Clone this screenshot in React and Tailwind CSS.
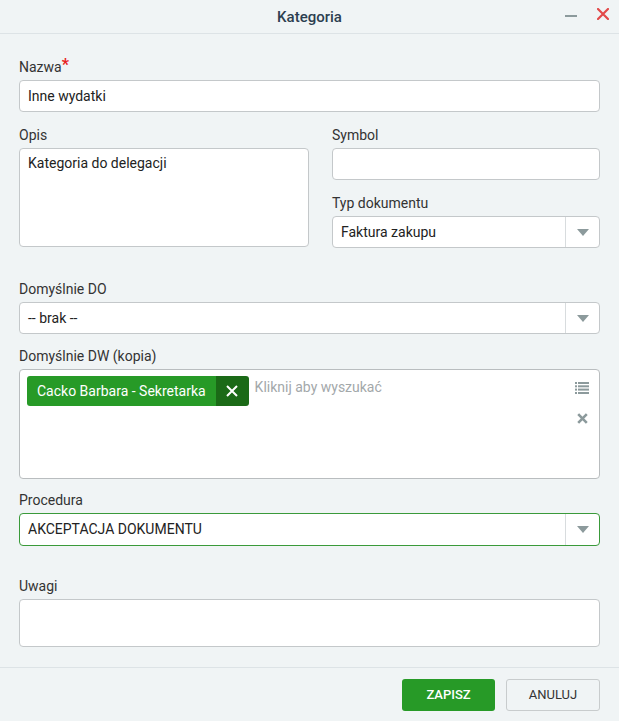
import React from "react";

const Label = ({ children, className = "" }) => (
  <div className={"h-5 leading-5 text-[14px] text-[#333] mb-[3px] " + className}>{children}</div>
);

const Arrow = () => (
  <div className="w-[34px] self-stretch border-l border-[#d8dcde] flex items-center justify-center">
    <svg width="12" height="7" viewBox="0 0 12 7"><path d="M0 0h12L6 7z" fill="#8c9a9c" /></svg>
  </div>
);

const Select = ({ value, className = "", h = "h-8" }) => (
  <div className={"flex items-center bg-white rounded-[4px] border " + h + " " + className}>
    <div className="flex-1 px-[8px] text-[14px] text-[#222] truncate">{value}</div>
    <Arrow />
  </div>
);

export default function App() {
  return (
    <div className="w-[619px] h-[721px] bg-[#f0f4f5] flex flex-col" style={{ fontFamily: "Roboto, 'Liberation Sans', sans-serif" }}>
      <div className="h-[34px] border-b border-[#dde3e6] relative flex items-center justify-center shrink-0 pt-[2px]">
        <div className="text-[15px] font-medium text-[#2c3e50]">Kategoria</div>
        <div className="absolute right-[42px] top-[15px] w-[12px] h-[2px] bg-[#8c9a9c]" />
        <svg className="absolute right-[10px] top-[8px]" width="12" height="12" viewBox="0 0 12 12">
          <path d="M1 1L11 11M11 1L1 11" stroke="#e24a4a" strokeWidth="2.2" strokeLinecap="round" />
        </svg>
      </div>
      <div className="flex-1 px-[19px] pt-[23px] flex flex-col">
        <Label>Nazwa<span className="text-[#e8211d] text-[16px] font-bold align-top leading-4">*</span></Label>
        <div className="h-8 bg-white border border-[#c4c8ca] rounded-[4px] flex items-center px-[8px] text-[14px] text-[#222]">Inne wydatki</div>

        <div className="flex gap-[23px] mt-[13px]">
          <div className="w-[290px] flex flex-col">
            <Label>Opis</Label>
            <div className="h-[99px] bg-white border border-[#c4c8ca] rounded-[4px] px-[8px] pt-[4px] text-[14px] text-[#222]">Kategoria do delegacji</div>
          </div>
          <div className="flex-1 flex flex-col">
            <Label>Symbol</Label>
            <div className="h-8 bg-white border border-[#c4c8ca] rounded-[4px]" />
            <Label className="mt-[13px]">Typ dokumentu</Label>
            <Select value="Faktura zakupu" className="border-[#c4c8ca]" />
          </div>
        </div>

        <Label className="mt-[31px]">Domyślnie DO</Label>
        <Select value="-- brak --" className="border-[#c4c8ca]" />

        <Label className="mt-[12px]">Domyślnie DW (kopia)</Label>
        <div className="h-[110px] bg-white border border-[#b9bdbf] rounded-[4px] relative flex items-start pl-[7px] pt-[6px]">
          <div className="flex h-[30px] rounded-[3px] overflow-hidden">
            <div className="bg-[#279a27] text-white text-[14px] flex items-center px-[10px]">Cacko Barbara - Sekretarka</div>
            <div className="bg-[#1b6a17] w-[33px] flex items-center justify-center">
              <svg width="12" height="12" viewBox="0 0 12 12"><path d="M1 1L11 11M11 1L1 11" stroke="white" strokeWidth="2" /></svg>
            </div>
          </div>
          <div className="ml-[6px] mt-[1px] text-[14px] text-[#a3a8aa] leading-5">Kliknij aby wyszukać</div>
          <svg className="absolute right-[10px] top-[12px]" width="14" height="12" viewBox="0 0 14 12" fill="#8c9a9c">
            <rect x="0" y="0" width="2" height="2" /><rect x="3" y="0" width="11" height="2" />
            <rect x="0" y="3.3" width="2" height="2" /><rect x="3" y="3.3" width="11" height="2" />
            <rect x="0" y="6.6" width="2" height="2" /><rect x="3" y="6.6" width="11" height="2" />
            <rect x="0" y="10" width="2" height="2" /><rect x="3" y="10" width="11" height="2" />
          </svg>
          <svg className="absolute right-[11px] top-[43px]" width="11" height="11" viewBox="0 0 11 11">
            <path d="M1.2 1.2L9.8 9.8M9.8 1.2L1.2 9.8" stroke="#8c9a9c" strokeWidth="2.6" />
          </svg>
        </div>

        <Label className="mt-[11px]">Procedura</Label>
        <Select value="AKCEPTACJA DOKUMENTU" className="border-[#3a9a3a]" h="h-[33px]" />

        <Label className="mt-[30px]">Uwagi</Label>
        <div className="h-[48px] bg-white border border-[#c4c8ca] rounded-[4px]" />
      </div>
      <div className="h-[54px] border-t border-[#dde3e6] flex items-start justify-end gap-[11px] pr-[19px] pt-[11px] shrink-0">
        <div className="w-[93px] h-8 bg-[#279a27] rounded-[3px] flex items-center justify-center text-white text-[13px] font-medium">ZAPISZ</div>
        <div className="w-[94px] h-8 border border-[#c8cccd] rounded-[3px] flex items-center justify-center text-[#333] text-[13px]">ANULUJ</div>
      </div>
    </div>
  );
}
